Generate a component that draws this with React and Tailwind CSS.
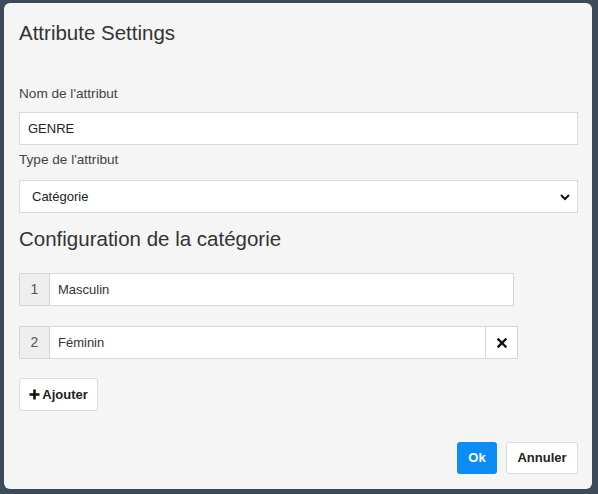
import React from "react";

const font = { fontFamily: '"Liberation Sans", Arial, sans-serif' };

const CategoryRow = ({ index, value, removable }) => (
  <div className="flex h-[33px]">
    <div className="w-[30px] flex items-center justify-center bg-[#eeeeee] border border-[#d6d6d6] border-r-0 text-[14px] text-[#555]">
      {index}
    </div>
    <div className="flex-1 flex items-center bg-white border border-[#d6d6d6] px-[8px] text-[13px] text-[#333]">
      {value}
    </div>
    {removable && (
      <div className="w-[32px] flex items-center justify-center bg-white border border-[#d6d6d6] border-l-0">
        <svg width="10" height="10" viewBox="0 0 10 10">
          <path d="M1.5 1.5 L8.5 8.5 M8.5 1.5 L1.5 8.5" stroke="#111" strokeWidth="2.4" strokeLinecap="square" />
        </svg>
      </div>
    )}
  </div>
);

export default function App() {
  return (
    <div className="w-[598px] h-[494px] bg-[#3d4b58] pl-[4px] pr-[6px] pt-[3px] overflow-hidden" style={font}>
      <div className="w-[588px] h-[486px] bg-[#f5f5f5] rounded-[6px] pl-[15px] pr-[14px] pt-[16px] flex flex-col">
        <h1 className="text-[20.5px] leading-[28px] text-[#333]">Attribute Settings</h1>

        <label className="mt-[37px] text-[13.6px] leading-[20px] text-[#444]">Nom de l'attribut</label>
        <div className="mt-[8px] h-[33px] bg-white border border-[#d9d9d9] flex items-center px-[8px] text-[13px] text-[#222]">
          GENRE
        </div>

        <label className="mt-[5px] text-[13.6px] leading-[20px] text-[#444]">Type de l'attribut</label>
        <div className="mt-[10px] h-[33px] bg-white border border-[#d9d9d9] flex items-center justify-between pl-[12px] pr-[6px] text-[13px] text-[#222]">
          <span>Catégorie</span>
          <svg width="12" height="8" viewBox="0 0 12 8">
            <path d="M2 2 L6 6 L10 2" fill="none" stroke="#111" strokeWidth="2" />
          </svg>
        </div>

        <h2 className="mt-[12px] text-[20.5px] leading-[28px] text-[#333]">Configuration de la catégorie</h2>

        <div className="mt-[20px] w-[495px]">
          <CategoryRow index={1} value="Masculin" />
        </div>
        <div className="mt-[20px] w-[499px]">
          <CategoryRow index={2} value="Féminin" removable />
        </div>

        <div className="mt-[19px]">
          <button className="h-[33px] w-[79px] bg-white border border-[#dcdcdc] rounded-[3px] flex items-center justify-center gap-[2px] text-[13px] font-bold text-[#222]">
            <svg width="11" height="11" viewBox="0 0 11 11">
              <path d="M5.5 0.5 V10.5 M0.5 5.5 H10.5" stroke="#111" strokeWidth="2.6" />
            </svg>
            Ajouter
          </button>
        </div>

        <div className="mt-[31px] flex justify-end gap-[9px]">
          <button className="h-[32px] w-[40px] bg-[#0b8df5] rounded-[3px] text-white text-[13px] font-bold">Ok</button>
          <button className="h-[32px] w-[72px] bg-white border border-[#dcdcdc] rounded-[3px] text-[#222] text-[13px] font-bold">
            Annuler
          </button>
        </div>
      </div>
    </div>
  );
}
